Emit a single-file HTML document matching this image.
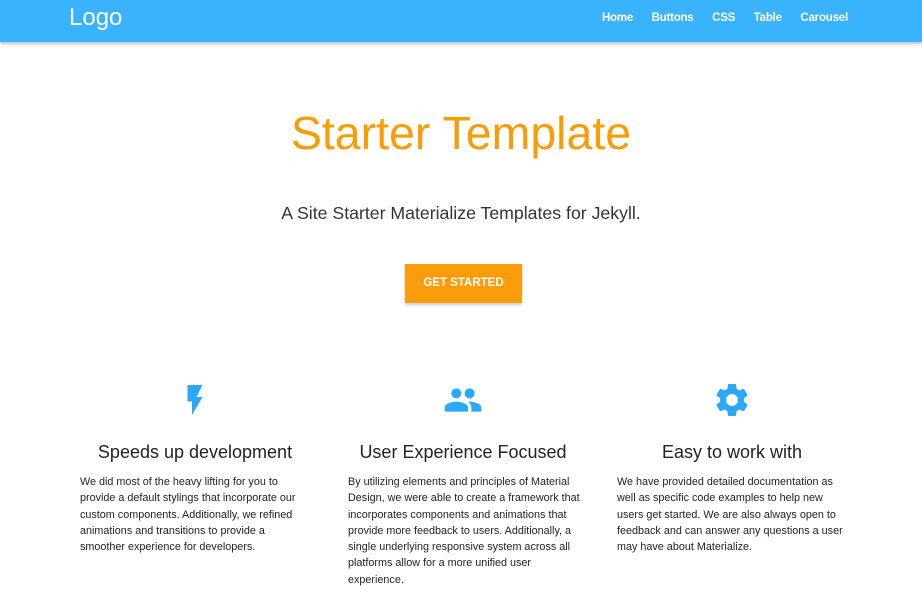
<!DOCTYPE html>
<html><head><style>
*{margin:0;padding:0;box-sizing:border-box}
body{width:922px;height:596px;background:#fff;font-family:"Liberation Sans",sans-serif;overflow:hidden;position:relative}
nav{height:42px;background:#39b3fc;box-shadow:0 2px 3px rgba(0,0,0,.25);position:relative;color:#fff}
.logo{position:absolute;left:69px;top:4px;font-size:24px}
.links{position:absolute;right:74px;top:12px;font-size:11.5px;font-weight:bold;letter-spacing:-.2px}
.links span{margin-left:18.5px}
h1{position:absolute;top:106px;width:100%;text-align:center;font-weight:300;font-size:46.5px;color:#f99d07}
.sub{position:absolute;top:203px;width:100%;text-align:center;font-weight:300;font-size:17.7px;color:#333}
.btn{position:absolute;left:405px;top:264px;width:117px;height:39px;background:#fb9c0a;color:#fff;font-size:11.5px;font-weight:bold;text-align:center;line-height:39px;box-shadow:0 2px 3px rgba(0,0,0,.2)}
.col{position:absolute;top:380px;width:250px}
.col svg{display:block;margin:0 auto}
.col h3{position:absolute;top:62px;width:100%;text-align:center;font-weight:normal;font-size:18px;color:#222}
.col p{position:absolute;top:94px;left:0;width:234px;font-size:10.8px;line-height:16.3px;color:#222;font-weight:300}
</style></head><body>
<nav><div class="logo">Logo</div><div class="links"><span>Home</span><span>Buttons</span><span>CSS</span><span>Table</span><span>Carousel</span></div></nav>
<h1>Starter Template</h1>
<div class="sub">A Site Starter Materialize Templates for Jekyll.</div>
<div class="btn">GET STARTED</div>
<div class="col" style="left:70px"><svg width="36" height="36" viewBox="0 0 24 24" style="margin-top:2px"><path fill="#29a9f8" d="M7 2v11h3v9l7-12h-4l4-8z"/></svg><h3>Speeds up development</h3><p style="left:10px;width:226px">We did most of the heavy lifting for you to provide a default stylings that incorporate our custom components. Additionally, we refined animations and transitions to provide a smoother experience for developers.</p></div>
<div class="col" style="left:338px"><svg width="40" height="40" viewBox="0 0 24 24"><path fill="#29a9f8" d="M16 11c1.66 0 2.99-1.34 2.99-3S17.66 5 16 5c-1.66 0-3 1.34-3 3s1.34 3 3 3zm-8 0c1.66 0 2.99-1.34 2.99-3S9.66 5 8 5C6.34 5 5 6.34 5 8s1.34 3 3 3zm0 2c-2.33 0-7 1.17-7 3.5V19h14v-2.5c0-2.33-4.67-3.5-7-3.5zm8 0c-.29 0-.62.02-.97.05 1.16.84 1.97 1.97 1.97 3.45V19h6v-2.5c0-2.33-4.67-3.5-7-3.5z"/></svg><h3>User Experience Focused</h3><p style="left:10px">By utilizing elements and principles of Material Design, we were able to create a framework that incorporates components and animations that provide more feedback to users. Additionally, a single underlying responsive system across all platforms allow for a more unified user experience.</p></div>
<div class="col" style="left:607px"><svg width="40" height="40" viewBox="0 0 24 24"><path fill="#29a9f8" d="M19.14 12.94c.04-.3.06-.61.06-.94 0-.32-.02-.64-.07-.94l2.03-1.58a.49.49 0 0 0 .12-.61l-1.92-3.32a.488.488 0 0 0-.59-.22l-2.39.96c-.5-.38-1.03-.7-1.62-.94l-.36-2.54a.484.484 0 0 0-.48-.41h-3.84c-.24 0-.43.17-.47.41l-.36 2.54c-.59.24-1.13.57-1.62.94l-2.39-.96c-.22-.08-.47 0-.59.22L2.74 8.87c-.12.21-.08.47.12.61l2.03 1.58c-.05.3-.09.63-.09.94s.02.64.07.94l-2.03 1.58a.49.49 0 0 0-.12.61l1.92 3.32c.12.22.37.29.59.22l2.39-.96c.5.38 1.03.7 1.62.94l.36 2.54c.05.24.24.41.48.41h3.84c.24 0 .44-.17.47-.41l.36-2.54c.59-.24 1.13-.56 1.62-.94l2.39.96c.22.08.47 0 .59-.22l1.92-3.32c.12-.22.07-.47-.12-.61l-2.01-1.58zM12 15.6c-1.98 0-3.6-1.62-3.6-3.6s1.62-3.6 3.6-3.6 3.6 1.62 3.6 3.6-1.62 3.6-3.6 3.6z"/></svg><h3>Easy to work with</h3><p style="left:10px">We have provided detailed documentation as well as specific code examples to help new users get started. We are also always open to feedback and can answer any questions a user may have about Materialize.</p></div>
</body></html>
